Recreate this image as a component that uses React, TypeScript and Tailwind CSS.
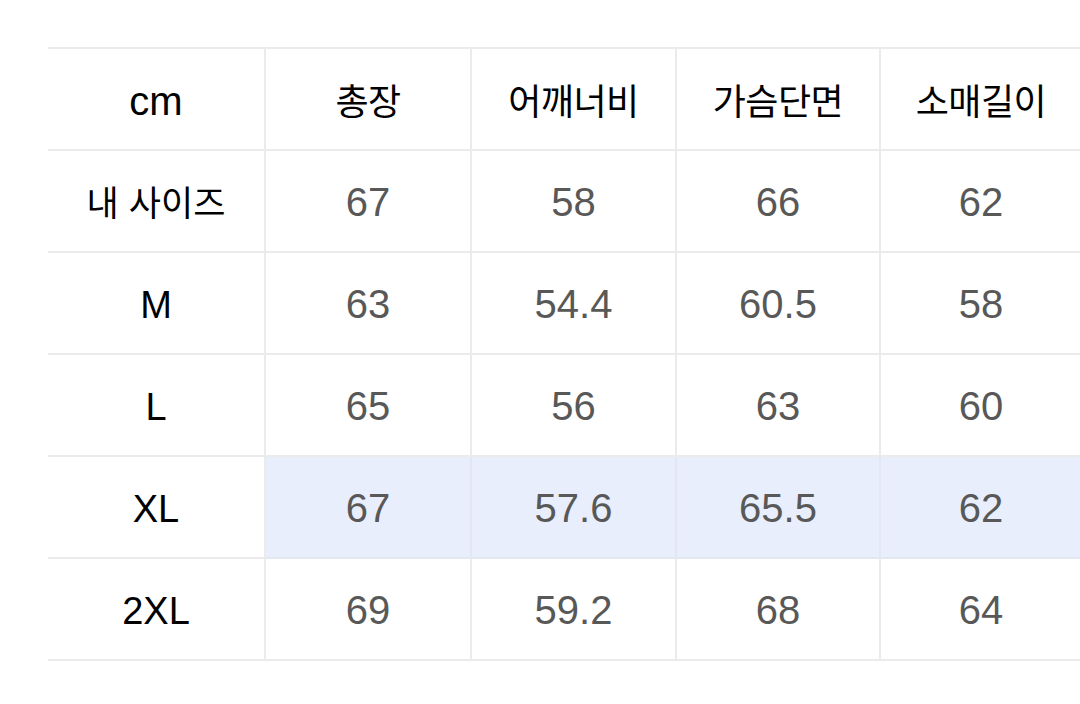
import React from 'react';

const headers = ['총장', '어깨너비', '가슴단면', '소매길이'];

const rows: { label: string; korean?: boolean; values: string[]; highlight?: boolean }[] = [
  { label: '내 사이즈', korean: true, values: ['67', '58', '66', '62'] },
  { label: 'M', values: ['63', '54.4', '60.5', '58'] },
  { label: 'L', values: ['65', '56', '63', '60'] },
  { label: 'XL', values: ['67', '57.6', '65.5', '62'], highlight: true },
  { label: '2XL', values: ['69', '59.2', '68', '64'] },
];

const cell = 'h-[102px] flex items-center justify-center border-r-2 border-b-2';
const latin = "font-['Liberation_Sans','Noto_Sans_CJK_KR',sans-serif]";
const hangul = "font-['Noto_Sans_CJK_KR','Liberation_Sans',sans-serif]";

const App: React.FC = () => {
  return (
    <div className="w-[1080px] h-[704px] bg-white overflow-hidden pt-[47px] pl-[48px]">
      <div className="grid w-[1040px] grid-cols-[218px_206px_205px_204px_202px] border-t-2 border-[#ebebeb]">
        {/* Header row */}
        <div className={`${cell} ${latin} border-[#ebebeb] text-[40px] text-black pt-[4px]`}>cm</div>
        {headers.map((h) => (
          <div key={h} className={`${cell} ${hangul} border-[#ebebeb] text-[36px] text-black tracking-[-0.5px]`}>
            {h}
          </div>
        ))}

        {/* Size rows */}
        {rows.map((row) => (
          <React.Fragment key={row.label}>
            <div
              className={`${cell} border-[#ebebeb] text-black ${
                row.korean ? `${hangul} text-[35px]` : `${latin} text-[38px] pt-[4px]`
              }`}
            >
              {row.korean ? (
                <span className="flex gap-[10px]">
                  <span>내</span>
                  <span>사이즈</span>
                </span>
              ) : (
                row.label
              )}
            </div>
            {row.values.map((v, i) => (
              <div
                key={i}
                className={`${cell} ${latin} text-[40px] text-[#585858] pt-[2px] ${
                  row.highlight ? 'bg-[#e8eefb] border-[#e2e7f2]' : 'border-[#ebebeb]'
                }`}
              >
                {v}
              </div>
            ))}
          </React.Fragment>
        ))}
      </div>
    </div>
  );
};

export default App;
